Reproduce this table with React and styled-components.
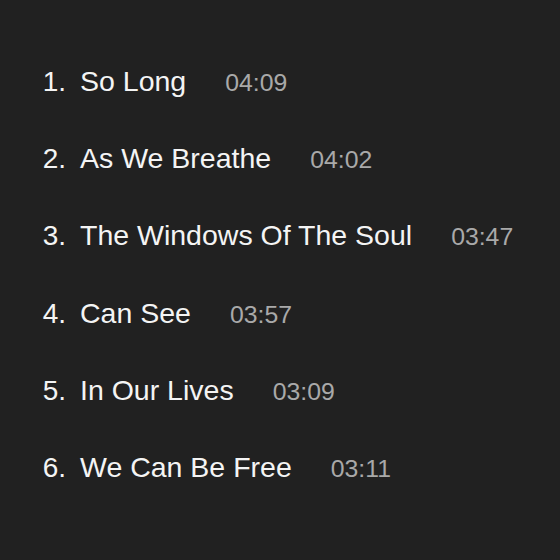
import React from "react";
import styled, { createGlobalStyle } from "styled-components";

const tracks = [
  { title: "So Long", time: "04:09" },
  { title: "As We Breathe", time: "04:02" },
  { title: "The Windows Of The Soul", time: "03:47" },
  { title: "Can See", time: "03:57" },
  { title: "In Our Lives", time: "03:09" },
  { title: "We Can Be Free", time: "03:11" },
];

const GlobalStyle = createGlobalStyle`
  html, body {
    margin: 0;
    background: #212121;
  }
  body {
    font-family: "Liberation Sans", Arial, sans-serif;
  }
`;

const Page = styled.div`
  width: 560px;
  height: 560px;
  box-sizing: border-box;
  padding-top: 43px;
  background: #212121;
`;

const List = styled.ol`
  list-style: none;
  margin: 0;
  padding: 0;
`;

const Row = styled.li`
  display: flex;
  align-items: baseline;
  height: 77.2px;
  line-height: 77.2px;
`;

const Num = styled.span`
  width: 66px;
  padding-right: 14px;
  text-align: right;
  font-size: 28px;
  color: #f4f4f4;
`;

const Title = styled.span`
  font-size: 28.5px;
  color: #f4f4f4;
`;

const Time = styled.span`
  margin-left: 39px;
  font-size: 24.8px;
  color: #a9a9a9;
`;

export default function App() {
  return (
    <>
      <GlobalStyle />
      <Page>
        <List>
          {tracks.map((t, i) => (
            <Row key={t.title}>
              <Num>{i + 1}.</Num>
              <Title>{t.title}</Title>
              <Time>{t.time}</Time>
            </Row>
          ))}
        </List>
      </Page>
    </>
  );
}
